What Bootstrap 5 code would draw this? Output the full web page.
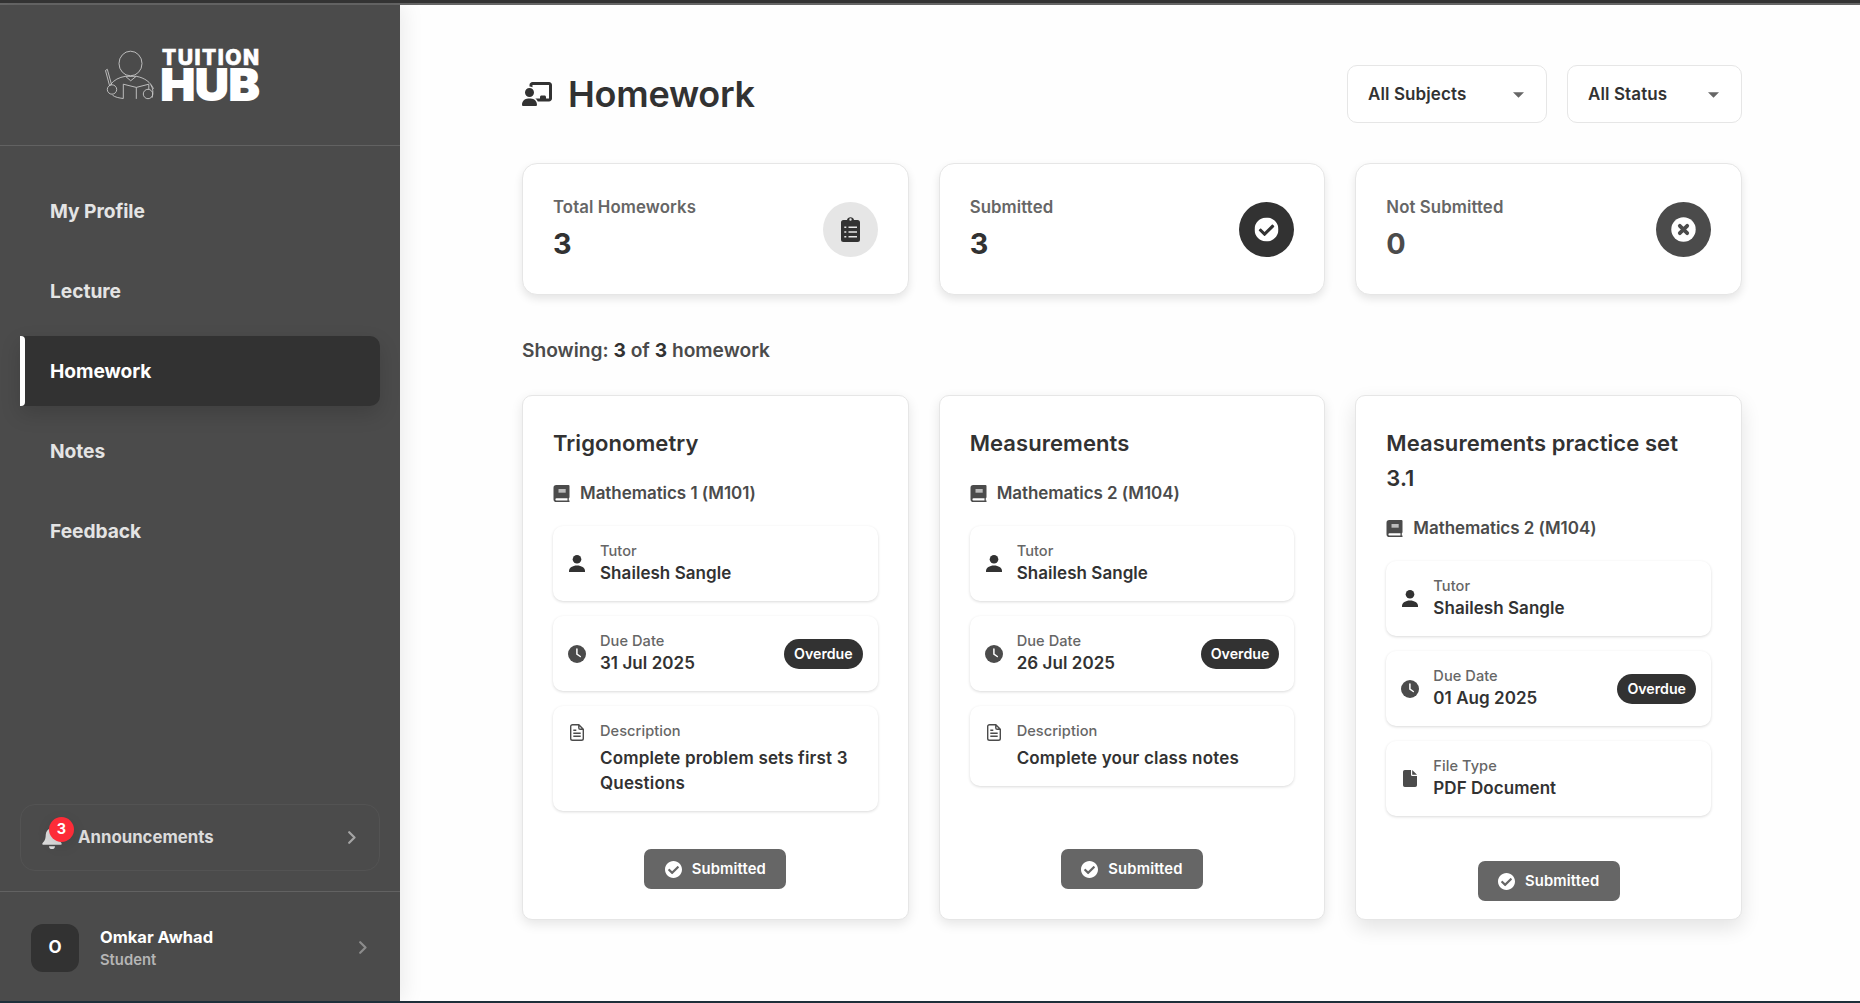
<!DOCTYPE html>
<html lang="en">
<head>
<meta charset="utf-8">
<meta name="viewport" content="width=device-width, initial-scale=1">
<title>Tuition Hub - Homework</title>
<link href="https://cdn.jsdelivr.net/npm/bootstrap@5.3.0/dist/css/bootstrap.min.css" rel="stylesheet">
<style>
  body { font-family: Inter, "Open Sans", sans-serif; font-weight: 600; color: #323232; background: #fefefe; font-size: 17px; }
  .app { height: 100vh; border-top: 3px solid #333; border-bottom: 2px solid #1e2f3a; overflow: hidden; }
  .app-line { height: 2px; background: #666; flex: none; }

  /* sidebar */
  .side { width: 400px; flex: none; background: #4b4b4b; box-shadow: 4px 0 20px rgba(0,0,0,.08); z-index: 1; }
  .brand { height: 141px; border-bottom: 1px solid #626262; padding: 38px 0 0 100px; }
  .menu { padding: 30px 20px; gap: 10px; }
  .menu .nav-link { height: 70px; padding: 0 30px; display: flex; align-items: center; color: #e4e4e4; font-size: 19.2px; font-weight: 700; letter-spacing: -.05px; border-radius: 10px; position: relative; }
  .menu .nav-link.active { background: #323232; color: #fff; box-shadow: 0 8px 20px rgba(0,0,0,.15); border-radius: 0 10px 10px 0; }
  .menu .nav-link.active::before { content: ""; position: absolute; left: 0; top: 0; bottom: 0; width: 5px; background: #fff; border-radius: 0 4px 4px 0; }
  .news { height: 67px; margin: 0 20px 20px; padding: 0 23px 0 21px; border: 1px solid #535353; border-radius: 15px; color: #dcdcdc; font-size: 16.8px; font-weight: 700; }
  .bell-box { width: 20px; height: 22px; margin-right: 16px; }
  .count { position: absolute; left: 7px; top: -10px; width: 25px; height: 25px; background: #fd2c38; color: #fff; font-size: 14.4px; font-weight: 700; box-shadow: 0 4px 14px rgba(0,0,0,.1); }
  .who { height: 110px; border-top: 1px solid #626262; padding: 2px 33px 0 31px; }
  .who-pic { width: 48px; height: 48px; border-radius: 12px; background: #323232; color: #fff; font-size: 17px; font-weight: 700; margin-right: 21px; }
  .who-name { color: #fff; font-size: 16.5px; font-weight: 700; line-height: 24px; }
  .who-role { color: #b5b5b5; font-size: 14.8px; line-height: 22px; }

  /* content */
  .page { padding: 60px 118px 0 122px; }
  .page h1 { font-size: 36px; font-weight: 600; letter-spacing: -.25px; padding-top: 1px; }
  .filters { gap: 20px; }
  .pick { height: 58px; border: 1px solid #e6e6e6; border-radius: 10px; background: #fff; color: #323232; padding: 1px 22px 0 20px; font-weight: 600; letter-spacing: .1px; display: flex; align-items: center; justify-content: space-between; }
  .pick-subject { width: 200px; } .pick-status { width: 175px; }
  .trio { display: grid; grid-template-columns: repeat(3, 1fr); gap: 30px; }
  .summary { margin-top: 40px; }
  .stat { height: 132px; padding: 31px 30px 30px; background: #fff; border: 1px solid #e6e6e6; border-radius: 15px; box-shadow: 0 4px 8px rgba(0,0,0,.1); }
  .stat-label { color: #666; font-size: 16.8px; line-height: 24px; letter-spacing: .1px; }
  .stat-num { font-size: 28.8px; font-weight: 700; line-height: 38px; margin-top: 6px; }
  .disc { width: 55px; height: 55px; flex: none; }
  .showing { color: #4b4b4b; font-size: 19.2px; line-height: 29px; margin: 41px 0 30px; }
  .showing b { color: #323232; font-weight: 700; }
  .hw { height: 525px; padding: 30px; background: #fff; border: 1px solid #e6e6e6; border-radius: 10px; box-shadow: 0 4px 12px rgba(0,0,0,.1); }
  .hw-raised { padding-bottom: 18px; box-shadow: 0 8px 20px rgba(0,0,0,.11); }
  .hw h2 { font-size: 22px; font-weight: 600; line-height: 35px; margin: 0 0 20px; letter-spacing: .07px; }
  .subject { color: #4b4b4b; line-height: 25px; gap: 10px; margin-bottom: 20px; letter-spacing: -.05px; }
  .info { border-radius: 10px; padding: 15px; gap: 14px; box-shadow: 0 1px 3px rgba(0,0,0,.15); margin-bottom: 15px; background: #fff; }
  .info-label { color: #666; font-size: 14.6px; line-height: 20px; font-weight: 500; letter-spacing: .05px; }
  .info-text { line-height: 25px; letter-spacing: .05px; }
  .info-long { margin-top: 5px; letter-spacing: .17px; }
  .late { background: #323232; color: #fff; font-size: 14.2px; font-weight: 600; line-height: 30px; height: 30px; padding: 0 10px; border-radius: 15px; }
  .done { width: 142px; height: 40px; border: 0; border-radius: 7px; background: #666; color: #fff; font-size: 14.8px; font-weight: 600; gap: 10px; padding: 1px 0 0; letter-spacing: .15px; }
  svg { flex: none; display: block; }
</style>
</head>
<body>
<svg width="0" height="0" class="position-absolute" aria-hidden="true">
  <symbol id="i-check" viewBox="8 8 496 496"><path d="M504 256c0 136.967-111.033 248-248 248S8 392.967 8 256 119.033 8 256 8s248 111.033 248 248zM227.314 387.314l184-184c6.248-6.248 6.248-16.379 0-22.627l-22.627-22.627c-6.248-6.249-16.379-6.249-22.628 0L216 308.118l-70.059-70.059c-6.248-6.248-16.379-6.248-22.628 0l-22.627 22.627c-6.248 6.248-6.248 16.379 0 22.627l104 104c6.249 6.249 16.379 6.249 22.628.001z"/></symbol>
  <symbol id="i-book" viewBox="0 0 16 17"><path fill-rule="evenodd" d="M2.800 0H15a1 1 0 0 1 1 1v11.300a1 1 0 0 1-.7.9v2.300H16V17H2.800A2.800 2.800 0 0 1 0 14.200V2.800A2.800 2.800 0 0 1 2.800 0zM3 13.300a1.100 1.100 0 0 0 0 2.200H14V13.300z"/><path d="M5 4h7.200v3.700H5z" fill="#bbb"/></symbol>
  <symbol id="i-person" viewBox="0 0 16 17"><circle cx="8" cy="4.300" r="4.300"/><path d="M0 17v-1.200C0 12.700 3.600 10.400 8 10.400s8 2.300 8 5.400V17z"/></symbol>
  <symbol id="i-clock" viewBox="0 0 18 18"><circle cx="9" cy="9" r="9"/><path d="M8.900 4v5.200l3.400 2.300" fill="none" stroke="#fff" stroke-width="1.500" stroke-linecap="round"/></symbol>
  <symbol id="i-doc" viewBox="0 0 14 17"><path d="M8.800.7H2.500A1.800 1.800 0 0 0 .7 2.500v12a1.800 1.800 0 0 0 1.800 1.800h9a1.800 1.800 0 0 0 1.800-1.800V5.300zM8.800.7v3.200c0 .8.600 1.400 1.400 1.400h3.100M3.300 6.300h3M3.300 9.300h7.400M3.300 12.300h7.400" fill="none" stroke="currentColor" stroke-width="1.400"/></symbol>
  <symbol id="i-file" viewBox="0 0 14 17"><path d="M8 0H1.800A1.800 1.800 0 0 0 0 1.800v13.400A1.800 1.800 0 0 0 1.800 17h10.400a1.800 1.800 0 0 0 1.800-1.800V6H9.200A1.200 1.200 0 0 1 8 4.800z"/><path d="M9.200 0v4.800H14z"/></symbol>
  <symbol id="i-next" viewBox="0 0 8 13"><path d="M1.200 1.200 6.500 6.500 1.200 11.800" fill="none" stroke="currentColor" stroke-width="2.200" stroke-linecap="round" stroke-linejoin="round"/></symbol>
</svg>

<div class="app d-flex flex-column">
  <div class="app-line"></div>
  <div class="d-flex flex-grow-1">
    <aside class="side d-flex flex-column">
      <div class="brand">
        <svg width="165" height="68" viewBox="100 43 165 68" font-family="Inter, sans-serif" font-weight="800" fill="#fff">
          <g fill="none" stroke="#c8c8c8" stroke-width=".9">
            <ellipse cx="130.500" cy="63.500" rx="11.500" ry="12.300"/>
            <circle cx="112" cy="89.500" r="4.700"/><circle cx="148" cy="94" r="4.700"/>
            <path d="M105.500 70.500l1.800-1.200 4.200 15.200-2 1zM110.500 84.500C114 80 119 77.300 125.500 76.300l5.200 4.500 5.500-4.500c8.500 1.500 14.500 6 17.300 12.500M125.500 76.300h10.700M123.300 98.500V84.200l13 3.200 12.500-3.200M136.300 87.400v11.500M112.500 95.200c2.500 2 6.500 2.800 10.800 3.300M148.800 84.200v5M150.500 84.500c2.500 3.500 3 8 1.500 13.300"/>
          </g>
          <g stroke="#fff" stroke-linejoin="miter">
            <text x="162" y="64.500" font-size="21" stroke-width=".7" textLength="97" lengthAdjust="spacing">TUITION</text>
            <text x="160.500" y="100.300" font-size="42.500" stroke-width="2" textLength="99" lengthAdjust="spacingAndGlyphs">HUB</text>
          </g>
        </svg>
      </div>
      <nav class="menu nav flex-column flex-grow-1 flex-nowrap">
        <a class="nav-link" href="#">My Profile</a>
        <a class="nav-link" href="#">Lecture</a>
        <a class="nav-link active" href="#">Homework</a>
        <a class="nav-link" href="#">Notes</a>
        <a class="nav-link" href="#">Feedback</a>
      </nav>
      <div class="news d-flex align-items-center">
        <div class="bell-box position-relative">
          <svg width="20" height="22" viewBox="0 0 20 22" fill="#dcdcdc"><path d="M10 1a6.500 6.500 0 0 0-6.200 6.200c-.2 4-.6 6.200-3 8.600-.9 1-.7 2 .4 2h17.600c1.100 0 1.300-1 .4-2-2.400-2.400-2.800-4.600-3-8.600A6.500 6.500 0 0 0 10 1zM7 19.200h6a3 3 0 0 1-6 0z"/></svg>
          <span class="count rounded-circle d-flex align-items-center justify-content-center">3</span>
        </div>
        <span class="flex-grow-1">Announcements</span>
        <svg width="8" height="13" color="#a5a5a5"><use href="#i-next"/></svg>
      </div>
      <div class="who d-flex align-items-center">
        <div class="who-pic d-flex align-items-center justify-content-center">O</div>
        <div class="flex-grow-1">
          <div class="who-name">Omkar Awhad</div>
          <div class="who-role">Student</div>
        </div>
        <svg width="8" height="13" color="#8c8c8c"><use href="#i-next"/></svg>
      </div>
    </aside>

    <main class="page flex-grow-1">
      <header class="d-flex justify-content-between align-items-center">
        <div class="d-flex align-items-center">
          <svg width="30" height="24" viewBox="0 0 640 512" fill="#323232" class="me-3"><path d="M160 64c0-35.300 28.700-64 64-64H576c35.300 0 64 28.700 64 64V352c0 35.300-28.700 64-64 64H336.800c-11.800-25.500-29.900-47.500-52.400-64H384V320c0-17.700 14.300-32 32-32h64c17.700 0 32 14.300 32 32v32h64V64L224 64v49.100C205.200 102.200 183.300 96 160 96V64zm0 64a96 96 0 1 1 0 192 96 96 0 1 1 0-192zM133.300 352h53.300C260.300 352 320 411.700 320 485.300c0 14.700-11.900 26.700-26.700 26.700H26.700C11.900 512 0 500.100 0 485.300C0 411.700 59.700 352 133.300 352z"/></svg>
          <h1 class="mb-0">Homework</h1>
        </div>
        <div class="filters d-flex">
          <button class="pick pick-subject">All Subjects <svg width="11" height="6" viewBox="0 0 12 6"><path d="M0 0h12L6 6z" fill="#666"/></svg></button>
          <button class="pick pick-status">All Status <svg width="11" height="6" viewBox="0 0 12 6"><path d="M0 0h12L6 6z" fill="#666"/></svg></button>
        </div>
      </header>

      <section class="trio summary">
        <div class="stat d-flex justify-content-between">
          <div><div class="stat-label">Total Homeworks</div><div class="stat-num">3</div></div>
          <svg class="disc align-self-center" viewBox="0 0 55 55"><circle cx="27.500" cy="27.500" r="27.500" fill="#e6e6e6"/><path fill="#323232" fill-rule="evenodd" d="M20.500 18H24a3.600 3.600 0 0 1 7 0h3.500A2.500 2.500 0 0 1 37 20.500v17a2.500 2.500 0 0 1-2.500 2.500h-14a2.500 2.500 0 0 1-2.500-2.500v-17A2.500 2.500 0 0 1 20.500 18zM27.500 16.300a1.200 1.200 0 1 0 0 2.400 1.200 1.200 0 0 0 0-2.400z"/><path d="M21.300 25.300h2M25.500 25.300h8.500M21.300 30h2M25.500 30h8.500M21.300 34.700h2M25.500 34.700h8.500" stroke="#e6e6e6" stroke-width="1.500"/></svg>
        </div>
        <div class="stat d-flex justify-content-between">
          <div><div class="stat-label">Submitted</div><div class="stat-num">3</div></div>
          <svg class="disc align-self-center" viewBox="0 0 55 55"><circle cx="27.500" cy="27.500" r="27.500" fill="#323232"/><use href="#i-check" x="15.500" y="15.500" width="24" height="24" fill="#fff"/></svg>
        </div>
        <div class="stat d-flex justify-content-between">
          <div><div class="stat-label">Not Submitted</div><div class="stat-num" style="color:#4b4b4b">0</div></div>
          <svg class="disc align-self-center" viewBox="0 0 55 55"><circle cx="27.500" cy="27.500" r="27.500" fill="#4b4b4b"/><circle cx="27.500" cy="27.500" r="12.200" fill="#fff"/><path d="M23.800 23.800l7.400 7.400M31.200 23.800l-7.400 7.400" stroke="#4b4b4b" stroke-width="3.800" stroke-linecap="round"/></svg>
        </div>
      </section>

      <div class="showing">Showing: <b>3</b> of <b>3</b> homework</div>

      <section class="trio">
        <article class="hw d-flex flex-column">
          <h2>Trigonometry</h2>
          <div class="subject d-flex align-items-center"><svg width="17" height="17" fill="#4b4b4b"><use href="#i-book"/></svg>Mathematics 1 (M101)</div>
          <div class="info d-flex align-items-center"><svg width="18" height="17" fill="#323232"><use href="#i-person"/></svg><div><div class="info-label">Tutor</div><div class="info-text">Shailesh Sangle</div></div></div>
          <div class="info d-flex align-items-center"><svg width="18" height="18" fill="#4b4b4b"><use href="#i-clock"/></svg><div class="flex-grow-1"><div class="info-label">Due Date</div><div class="info-text">31 Jul 2025</div></div><span class="late">Overdue</span></div>
          <div class="info d-flex align-items-start"><svg width="18" height="17" color="#4b4b4b" style="margin-top:3px"><use href="#i-doc"/></svg><div><div class="info-label">Description</div><div class="info-text info-long">Complete problem sets first 3 Questions</div></div></div>
          <button class="done btn d-flex align-items-center justify-content-center align-self-center mt-auto"><svg width="17" height="17" fill="#fff"><use href="#i-check"/></svg>Submitted</button>
        </article>

        <article class="hw d-flex flex-column">
          <h2>Measurements</h2>
          <div class="subject d-flex align-items-center"><svg width="17" height="17" fill="#4b4b4b"><use href="#i-book"/></svg>Mathematics 2 (M104)</div>
          <div class="info d-flex align-items-center"><svg width="18" height="17" fill="#323232"><use href="#i-person"/></svg><div><div class="info-label">Tutor</div><div class="info-text">Shailesh Sangle</div></div></div>
          <div class="info d-flex align-items-center"><svg width="18" height="18" fill="#4b4b4b"><use href="#i-clock"/></svg><div class="flex-grow-1"><div class="info-label">Due Date</div><div class="info-text">26 Jul 2025</div></div><span class="late">Overdue</span></div>
          <div class="info d-flex align-items-start"><svg width="18" height="17" color="#4b4b4b" style="margin-top:3px"><use href="#i-doc"/></svg><div><div class="info-label">Description</div><div class="info-text info-long">Complete your class notes</div></div></div>
          <button class="done btn d-flex align-items-center justify-content-center align-self-center mt-auto"><svg width="17" height="17" fill="#fff"><use href="#i-check"/></svg>Submitted</button>
        </article>

        <article class="hw hw-raised d-flex flex-column">
          <h2>Measurements practice set<br>3.1</h2>
          <div class="subject d-flex align-items-center"><svg width="17" height="17" fill="#4b4b4b"><use href="#i-book"/></svg>Mathematics 2 (M104)</div>
          <div class="info d-flex align-items-center"><svg width="18" height="17" fill="#323232"><use href="#i-person"/></svg><div><div class="info-label">Tutor</div><div class="info-text">Shailesh Sangle</div></div></div>
          <div class="info d-flex align-items-center"><svg width="18" height="18" fill="#4b4b4b"><use href="#i-clock"/></svg><div class="flex-grow-1"><div class="info-label">Due Date</div><div class="info-text">01 Aug 2025</div></div><span class="late">Overdue</span></div>
          <div class="info d-flex align-items-center"><svg width="18" height="17" fill="#4b4b4b"><use href="#i-file"/></svg><div><div class="info-label">File Type</div><div class="info-text">PDF Document</div></div></div>
          <button class="done btn d-flex align-items-center justify-content-center align-self-center mt-auto"><svg width="17" height="17" fill="#fff"><use href="#i-check"/></svg>Submitted</button>
        </article>
      </section>
    </main>
  </div>
</div>
<script src="https://cdn.jsdelivr.net/npm/bootstrap@5.3.0/dist/js/bootstrap.bundle.min.js"></script>
</body>
</html>
